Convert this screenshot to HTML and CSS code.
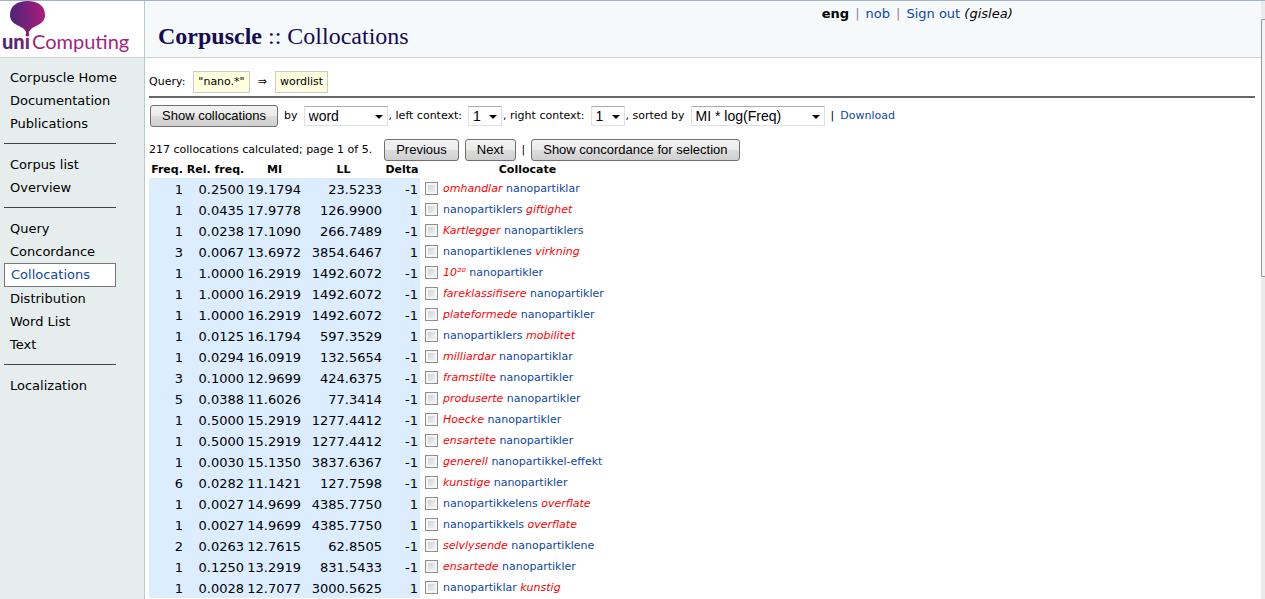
FILE: index.html
```html
<!DOCTYPE html>
<html lang="en">
<head>
<meta charset="utf-8">
<title>Corpuscle :: Collocations</title>
<link rel="stylesheet" href="styles.css">
</head>
<body>
<div class="page">
<aside class="sidebar">
<a class="logo" href="#" aria-label="uni Computing">
<svg width="140" height="56" viewBox="0 0 140 56">
<defs>
<linearGradient id="balloon" x1="0" x2="1" y1="0" y2="0"><stop offset="0" stop-color="#4a2576"/><stop offset="1" stop-color="#ae1c7d"/></linearGradient>
<linearGradient id="word" x1="0" x2="1" y1="0" y2="0"><stop offset="0" stop-color="#43256f"/><stop offset="1" stop-color="#7c2279"/></linearGradient>
</defs>
<path fill="url(#balloon)" d="M10 14C10 5 17 0 27.500 0S45 5 45 14C45 19 42 22 38 24C33 26.500 30 28 29 31L28.500 35H26.500L26 31C25 28 22 26.500 17 24C13 22 10 19 10 14Z"/>
<text class="logo-uni" x="2" y="48" fill="url(#word)">uni</text>
<text class="logo-name" x="32" y="48">Computing</text>
</svg>
</a>
<nav class="menu">
<div class="group">
<a href="#">Corpuscle Home</a>
<a href="#">Documentation</a>
<a href="#">Publications</a>
</div>
<div class="group">
<a href="#">Corpus list</a>
<a href="#">Overview</a>
</div>
<div class="group">
<a href="#">Query</a>
<a href="#">Concordance</a>
<a href="#" class="current">Collocations</a>
<a href="#">Distribution</a>
<a href="#">Word List</a>
<a href="#">Text</a>
</div>
<div class="group">
<a href="#">Localization</a>
</div>
</nav>
</aside>
<div class="content">
<header class="header">
<h1><b>Corpuscle</b> :: Collocations</h1>
<div class="account"><b>eng</b><span class="bar">|</span><a href="#">nob</a><span class="bar">|</span><a href="#">Sign out</a> <i>(gislea)</i></div>
</header>
<main class="main">
<div class="query"><span>Query:</span><span class="chip">"nano.*"</span><span class="arrow">⇒</span><span class="chip">wordlist</span></div>
<form class="controls">
<button type="button">Show collocations</button>
<label for="by">by</label>
<span class="pick pick-medium"><select id="by"><option>word</option></select></span>
<label for="left">, left context:</label>
<span class="pick pick-small"><select id="left"><option>1</option></select></span>
<label for="right">, right context:</label>
<span class="pick pick-small"><select id="right"><option>1</option></select></span>
<label for="sort">, sorted by</label>
<span class="pick pick-large"><select id="sort"><option>MI * log(Freq)</option></select></span>
<span class="divider">|</span>
<a href="#">Download</a>
</form>
<div class="pager">
<span class="status">217 collocations calculated; page 1 of 5.</span>
<button type="button">Previous</button>
<button type="button">Next</button>
<span>|</span>
<button type="button">Show concordance for selection</button>
</div>
<table class="results">
<colgroup><col class="c-freq"><col class="c-rel"><col class="c-mi"><col class="c-ll"><col class="c-delta"><col class="c-text"></colgroup>
<thead><tr><th>Freq.</th><th>Rel. freq.</th><th>MI</th><th>LL</th><th>Delta</th><th>Collocate</th></tr></thead>
<tbody>
<tr><td>1</td><td>0.2500</td><td>19.1794</td><td>23.5233</td><td>-1</td><td><label><input type="checkbox"><a href="#"><em>omhandlar</em> nanopartiklar</a></label></td></tr>
<tr><td>1</td><td>0.0435</td><td>17.9778</td><td>126.9900</td><td>1</td><td><label><input type="checkbox"><a href="#">nanopartiklers <em>giftighet</em></a></label></td></tr>
<tr><td>1</td><td>0.0238</td><td>17.1090</td><td>266.7489</td><td>-1</td><td><label><input type="checkbox"><a href="#"><em>Kartlegger</em> nanopartiklers</a></label></td></tr>
<tr><td>3</td><td>0.0067</td><td>13.6972</td><td>3854.6467</td><td>1</td><td><label><input type="checkbox"><a href="#">nanopartiklenes <em>virkning</em></a></label></td></tr>
<tr><td>1</td><td>1.0000</td><td>16.2919</td><td>1492.6072</td><td>-1</td><td><label><input type="checkbox"><a href="#"><em>10²⁰</em> nanopartikler</a></label></td></tr>
<tr><td>1</td><td>1.0000</td><td>16.2919</td><td>1492.6072</td><td>-1</td><td><label><input type="checkbox"><a href="#"><em>fareklassifisere</em> nanopartikler</a></label></td></tr>
<tr><td>1</td><td>1.0000</td><td>16.2919</td><td>1492.6072</td><td>-1</td><td><label><input type="checkbox"><a href="#"><em>plateformede</em> nanopartikler</a></label></td></tr>
<tr><td>1</td><td>0.0125</td><td>16.1794</td><td>597.3529</td><td>1</td><td><label><input type="checkbox"><a href="#">nanopartiklers <em>mobilitet</em></a></label></td></tr>
<tr><td>1</td><td>0.0294</td><td>16.0919</td><td>132.5654</td><td>-1</td><td><label><input type="checkbox"><a href="#"><em>milliardar</em> nanopartiklar</a></label></td></tr>
<tr><td>3</td><td>0.1000</td><td>12.9699</td><td>424.6375</td><td>-1</td><td><label><input type="checkbox"><a href="#"><em>framstilte</em> nanopartikler</a></label></td></tr>
<tr><td>5</td><td>0.0388</td><td>11.6026</td><td>77.3414</td><td>-1</td><td><label><input type="checkbox"><a href="#"><em>produserte</em> nanopartikler</a></label></td></tr>
<tr><td>1</td><td>0.5000</td><td>15.2919</td><td>1277.4412</td><td>-1</td><td><label><input type="checkbox"><a href="#"><em>Hoecke</em> nanopartikler</a></label></td></tr>
<tr><td>1</td><td>0.5000</td><td>15.2919</td><td>1277.4412</td><td>-1</td><td><label><input type="checkbox"><a href="#"><em>ensartete</em> nanopartikler</a></label></td></tr>
<tr><td>1</td><td>0.0030</td><td>15.1350</td><td>3837.6367</td><td>-1</td><td><label><input type="checkbox"><a href="#"><em>generell</em> nanopartikkel-effekt</a></label></td></tr>
<tr><td>6</td><td>0.0282</td><td>11.1421</td><td>127.7598</td><td>-1</td><td><label><input type="checkbox"><a href="#"><em>kunstige</em> nanopartikler</a></label></td></tr>
<tr><td>1</td><td>0.0027</td><td>14.9699</td><td>4385.7750</td><td>1</td><td><label><input type="checkbox"><a href="#">nanopartikkelens <em>overflate</em></a></label></td></tr>
<tr><td>1</td><td>0.0027</td><td>14.9699</td><td>4385.7750</td><td>1</td><td><label><input type="checkbox"><a href="#">nanopartikkels <em>overflate</em></a></label></td></tr>
<tr><td>2</td><td>0.0263</td><td>12.7615</td><td>62.8505</td><td>-1</td><td><label><input type="checkbox"><a href="#"><em>selvlysende</em> nanopartiklene</a></label></td></tr>
<tr><td>1</td><td>0.1250</td><td>13.2919</td><td>831.5433</td><td>-1</td><td><label><input type="checkbox"><a href="#"><em>ensartede</em> nanopartikler</a></label></td></tr>
<tr><td>1</td><td>0.0028</td><td>12.7077</td><td>3000.5625</td><td>1</td><td><label><input type="checkbox"><a href="#">nanopartiklar <em>kunstig</em></a></label></td></tr>
</tbody>
</table>
</main>
</div>
<div class="scroll-track"><div class="scroll-thumb"></div></div>
</div>
</body>
</html>
```

FILE: styles.css
```css
* { box-sizing: border-box; }
body {
  margin: 0;
  background: #fff;
  color: #000;
  font: 11px/16px Verdana, "DejaVu Sans", sans-serif;
}
a { color: #0d47a1; text-decoration: none; }
.page {
  display: flex;
  min-height: 100vh;
  border-top: 1px solid #a3b5cc;
}

/* Sidebar */
.sidebar {
  flex: 0 0 145px;
  min-width: 0;
  background: #e5eeec;
  border-right: 1px solid #b9caca;
}
.logo {
  display: block;
  height: 57px;
  background: #fff;
  border-bottom: 1px solid #ccd0d2;
}
.logo svg { display: block; }
.logo-uni { font: 900 20px Lato, sans-serif; }
.logo-name { font: 400 20px Lato, sans-serif; fill: #a31f7c; }
.menu { padding: 8px 28px 0 4px; font-size: 13px; }
.group { padding-bottom: 8px; }
.group + .group { border-top: 1px solid #444; padding-top: 9px; }
.group a {
  display: block;
  padding-left: 6px;
  line-height: 23px;
  color: #000;
  white-space: nowrap;
}
.group .current {
  color: #0d47a1;
  background: #fff;
  border: 1px solid #777;
  line-height: 22px;
}

/* Header */
.content { flex: 1; min-width: 0; }
.header {
  display: grid;
  grid-template-columns: 3fr 2fr;
  height: 57px;
  padding-left: 13px;
  background: #f5f9fa;
  border-bottom: 1px solid #ccd0d2;
}
.header h1 {
  margin: 0;
  padding-top: 21px;
  font: 24px/28px "Times New Roman", "Liberation Serif", serif;
  color: #160c55;
}
.account { padding: 5px 0 0 2px; font-size: 13px; white-space: nowrap; }
.bar { margin: 0 6px; color: #9a7f9f; }

/* Query and controls */
.main { padding: 13px 6px 0 4px; }
.query {
  display: flex;
  align-items: center;
  gap: 8px;
  padding-bottom: 3px;
  border-bottom: 2px solid #666;
}
.chip {
  padding: 2px 4px;
  background: #ffffe0;
  border: 1px solid #ccc;
}
.controls, .pager { display: flex; align-items: center; gap: 6px; }
.controls { padding: 7px 0 0 1px; }
.pager { padding-top: 12px; }
.status { padding-right: 6px; }
button, select {
  font: 14px/18px Arial, "Liberation Sans", sans-serif;
  color: #000;
}
button {
  height: 22px;
  padding: 0 10px;
  border: 1px solid #707070;
  border-radius: 3px;
  background: linear-gradient(#f2f2f2, #ebebeb 50%, #ddd 50%, #cfcfcf);
  font-size: 13px;
  white-space: nowrap;
}
.pick { position: relative; }
.pick::after {
  content: "";
  position: absolute;
  right: 5px;
  top: 9px;
  border: 4px solid transparent;
  border-top-color: #000;
  border-bottom: 0;
  pointer-events: none;
}
.pick select {
  display: block;
  width: 100%;
  height: 20px;
  padding: 0 4px;
  border: 1px solid #dde0e6;
  border-top-color: #abadb3;
  border-radius: 0;
  background: #fff;
  appearance: none;
}
.pick + label { margin-left: -5px; }
.pick-small { width: 34px; }
.pick-medium { width: 84px; }
.pick-large { width: 134px; }
.controls button, .pager button { padding: 0 11px; }

/* Results */
.results {
  width: 486px;
  max-width: 100%;
  table-layout: fixed;
  border-collapse: collapse;
}
.c-freq { width: 36px; }
.c-rel { width: 61px; }
.c-mi { width: 57px; }
.c-ll { width: 81px; }
.c-delta { width: 36px; }
.results th { padding: 0; line-height: 17px; white-space: nowrap; }
.results td {
  height: 21px;
  padding: 2px 2px 0 0;
  background: #dcedff;
  font-size: 13px;
  line-height: 18px;
  text-align: right;
  white-space: nowrap;
}
.results td:last-child {
  padding: 0 0 0 5px;
  background: none;
  font-size: 11px;
  text-align: left;
}
.results label { display: flex; align-items: center; gap: 5px; }
.results em { color: #f00; }
input[type="checkbox"] {
  width: 13px;
  height: 13px;
  margin: 0;
  border: 1px solid #8e8f8f;
  background: linear-gradient(135deg, #c8ccd2, #f8f8f8);
  box-shadow: inset 0 0 0 2px #f4f4f4;
  appearance: none;
}

/* Scroll indicator */
.scroll-track { flex: 0 0 4px; padding-top: 18px; background: #ebebeb; }
.scroll-thumb {
  height: 43vh;
  background: #f3f3f3;
  border: 1px solid #979797;
  border-right: 0;
  border-radius: 2px 0 0 2px;
}
```
